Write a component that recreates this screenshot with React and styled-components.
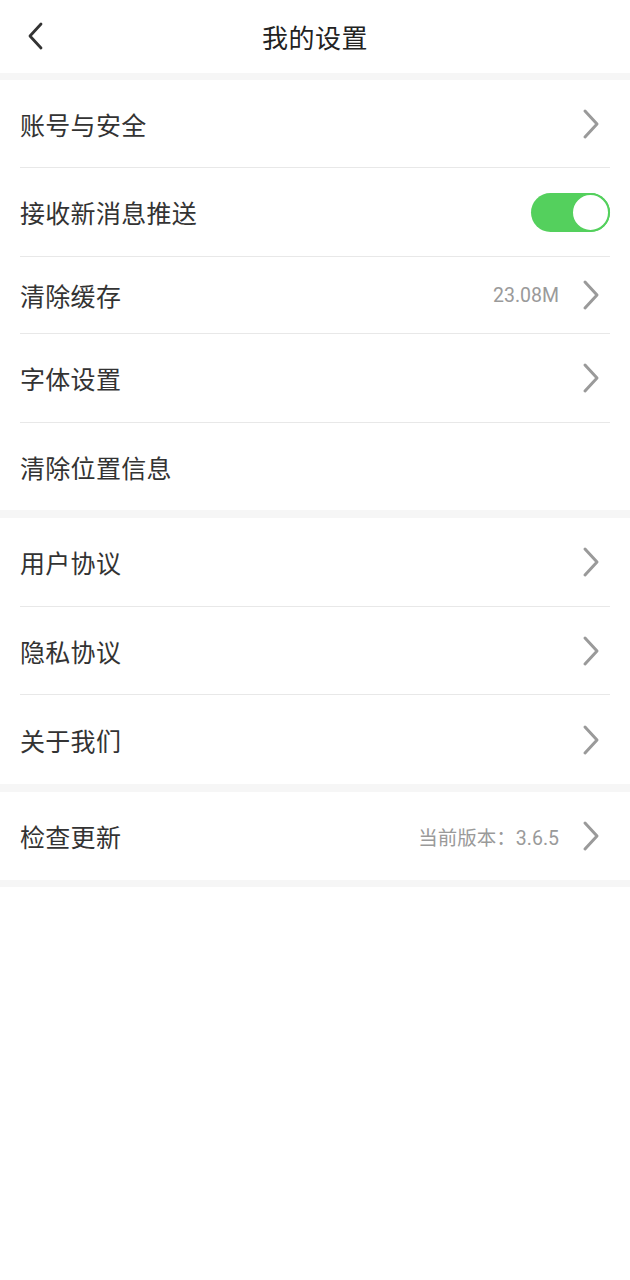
import React, { useState } from "react";
import styled, { createGlobalStyle } from "styled-components";

const GlobalStyle = createGlobalStyle`
  body {
    margin: 0;
    background: #ffffff;
    font-family: "Noto Sans CJK SC", "Noto Sans", sans-serif;
  }
`;

const Page = styled.div`
  width: 630px;
  min-height: 1280px;
  background: #ffffff;
`;

const Header = styled.div`
  position: relative;
  height: 73px;
  display: flex;
  align-items: center;
  justify-content: center;
`;

const BackButton = styled.button`
  position: absolute;
  left: 20px;
  top: 18px;
  width: 32px;
  height: 36px;
  padding: 0;
  border: none;
  background: none;
  display: flex;
  align-items: center;
  justify-content: center;
`;

const Title = styled.h1`
  margin: 0;
  font-size: 26px;
  font-weight: 400;
  color: #222;
  letter-spacing: 0.5px;
`;

const Gap = styled.div`
  height: ${(p) => p.h || 8}px;
  background: #f6f6f6;
`;

const Section = styled.div`
  background: #fff;
`;

const Row = styled.div`
  height: ${(p) => p.h || 88}px;
  margin: 0 20px;
  display: flex;
  align-items: center;
  justify-content: space-between;
  border-bottom: ${(p) => (p.last ? "none" : "1px solid #e8e8e8")};
  box-sizing: border-box;
`;

const Label = styled.span`
  font-size: 25px;
  color: #333;
  letter-spacing: 0.3px;
`;

const Right = styled.div`
  display: flex;
  align-items: center;
`;

const Value = styled.span`
  font-size: 19.5px;
  color: #9a9a9a;
  margin-right: 22px;
  font-family: "Roboto", "Noto Sans CJK SC", sans-serif;
`;

const Toggle = styled.button`
  width: 79px;
  height: 39px;
  padding: 0;
  border: none;
  border-radius: 20px;
  background: ${(p) => (p.on ? "#54d05d" : "#e5e5e5")};
  display: flex;
  align-items: center;
  justify-content: ${(p) => (p.on ? "flex-end" : "flex-start")};
  cursor: pointer;
`;

const Knob = styled.span`
  width: 35px;
  height: 35px;
  border-radius: 50%;
  background: #fff;
  border: 2px solid ${(p) => (p.on ? "#54d05d" : "#e5e5e5")};
`;

const ArrowBox = styled.span`
  display: flex;
  margin-right: 9px;
`;

const Chevron = () => (
  <ArrowBox>
    <svg width="20" height="32" viewBox="0 0 20 32">
      <polyline
        points="4,3 16,16 4,29"
        fill="none"
        stroke="#9a9a9a"
        strokeWidth="3"
        strokeLinecap="round"
        strokeLinejoin="round"
      />
    </svg>
  </ArrowBox>
);

const Item = ({ label, value, arrow = true, h, last, children }) => (
  <Row h={h} last={last}>
    <Label>{label}</Label>
    <Right>
      {value && <Value>{value}</Value>}
      {children}
      {arrow && <Chevron />}
    </Right>
  </Row>
);

export default function App() {
  const [push, setPush] = useState(true);

  return (
    <Page>
      <GlobalStyle />
      <Header>
        <BackButton>
          <svg width="20" height="30" viewBox="0 0 20 30">
            <polyline
              points="15,3 4,15 15,27"
              fill="none"
              stroke="#333"
              strokeWidth="2.8"
              strokeLinecap="round"
              strokeLinejoin="round"
            />
          </svg>
        </BackButton>
        <Title>我的设置</Title>
      </Header>
      <Gap h={7} />
      <Section>
        <Item label="账号与安全" />
        <Item label="接收新消息推送" arrow={false} h={89}>
          <Toggle on={push} onClick={() => setPush(!push)}>
            <Knob on={push} />
          </Toggle>
        </Item>
        <Item label="清除缓存" value="23.08M" h={77} />
        <Item label="字体设置" h={89} />
        <Item label="清除位置信息" arrow={false} h={87} last />
      </Section>
      <Gap h={8} />
      <Section>
        <Item label="用户协议" h={89} />
        <Item label="隐私协议" />
        <Item label="关于我们" h={89} last />
      </Section>
      <Gap h={8} />
      <Section>
        <Item label="检查更新" value="当前版本：3.6.5" last />
      </Section>
      <Gap h={7} />
    </Page>
  );
}
